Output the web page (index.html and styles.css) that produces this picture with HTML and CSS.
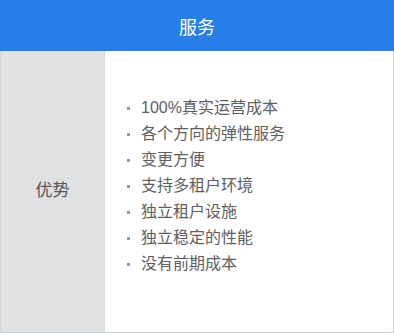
FILE: index.html
```html
<!DOCTYPE html>
<html lang="zh">
<head>
<meta charset="utf-8">
<link rel="stylesheet" href="styles.css">
</head>
<body>
<div class="table">
  <div class="head">服务</div>
  <div class="row">
    <div class="label">优势</div>
    <div class="cell">
      <ul class="list">
        <li>100%真实运营成本</li>
        <li>各个方向的弹性服务</li>
        <li>变更方便</li>
        <li>支持多租户环境</li>
        <li>独立租户设施</li>
        <li>独立稳定的性能</li>
        <li>没有前期成本</li>
      </ul>
    </div>
  </div>
</div>
</body>
</html>
```
FILE: styles.css
```css
html, body {
  margin: 0;
  padding: 0;
  background: #fff;
}
.table {
  width: 394px;
  height: 333px;
  display: flex;
  flex-direction: column;
  font-family: "Liberation Sans", "Noto Sans CJK SC", sans-serif;
}
.head {
  height: 51px;
  flex: none;
  background: #277ee9;
  color: #fff;
  font-size: 18px;
  display: flex;
  align-items: center;
  justify-content: center;
}
.row {
  flex: 1;
  display: grid;
  grid-template-columns: 105px 1fr;
  border-right: 1px solid #c9ccd0;
  border-bottom: 1px solid #c9ccd0;
}
.label {
  background: #dfe1e3;
  border-left: 1px solid #d3d6d9;
  border-right: 1px solid #d8dbde;
  display: flex;
  align-items: center;
  justify-content: center;
  color: #555;
  font-size: 17px;
  padding-bottom: 6px;
}
.cell {
  display: flex;
  align-items: center;
  padding-left: 20px;
  padding-bottom: 12px;
}
.list {
  list-style: none;
  margin: 0;
  padding: 0;
}
.list li {
  position: relative;
  padding-left: 16px;
  font-size: 16px;
  line-height: 26px;
  color: #5e5e5e;
}
.list li::before {
  content: "";
  position: absolute;
  left: 2px;
  top: 12px;
  width: 3px;
  height: 3px;
  background: #999;
}
```
